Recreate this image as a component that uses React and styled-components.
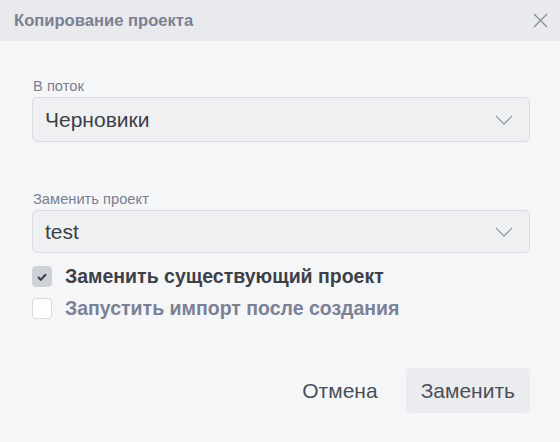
import React from 'react'
import styled, { createGlobalStyle } from 'styled-components';

const GlobalStyle = createGlobalStyle`
    html, body {
        margin: 0;
        padding: 0;
        background: #f5f6f8;
        font-family: "Liberation Sans", Arial, sans-serif;
    }
`;
const Dialog = styled.div`
    width: 560px;
    height: 442px;
    background: #f5f6f8;
    display: flex;
    flex-direction: column;
`;
const Header = styled.div`
    height: 41px;
    flex-shrink: 0;
    background: #e9eaee;
    display: flex;
    align-items: center;
    justify-content: space-between;
    padding: 0 12px 0 14px;
    box-sizing: border-box;
`;
const Title = styled.div`
    font-weight: bold;
    font-size: 16.6px;
    color: #7b8093;
    margin-top: 1px;
`;
const CloseButton = styled.button`
    border: none;
    background: none;
    padding: 0;
    width: 15px;
    height: 15px;
    display: flex;
    cursor: pointer;
`;
const Body = styled.div`
    display: flex;
    flex-direction: column;
    padding: 37px 30px 0 32px;
`;
const Field = styled.div`
    display: flex;
    flex-direction: column;
    margin-bottom: ${props => props.gap || 0}px;
`;
const Label = styled.div`
    font-size: 14.7px;
    line-height: 17px;
    color: #7b8090;
    margin-bottom: 2px;
    padding-left: 1px;
`;
const Select = styled.div`
    height: ${props => props.h || 45}px;
    box-sizing: border-box;
    border: 1px solid #dadbe0;
    border-radius: 5px;
    background: #eff0f2;
    display: flex;
    align-items: center;
    justify-content: space-between;
    padding: 0 16px 0 12px;
    font-size: 21px;
    color: #3c3f46;
`;
const CheckRow = styled.label`
    display: flex;
    align-items: center;
    gap: 13px;
    height: 21px;
    margin-top: ${props => props.top || 0}px;
    font-size: 19.5px;
    font-weight: bold;
    color: ${props => props.muted ? '#7c8194' : '#3d4047'};
`;
const Box = styled.span`
    width: 20px;
    height: 21px;
    box-sizing: border-box;
    border-radius: 4px;
    display: flex;
    align-items: center;
    justify-content: center;
    background: ${props => props.checked ? '#cfd1d8' : '#ffffff'};
    border: 1px solid ${props => props.checked ? '#cfd1d8' : '#d8dae0'};
`;
const Footer = styled.div`
    display: flex;
    justify-content: flex-end;
    align-items: center;
    gap: 13px;
    padding: 0 30px 29px 0;
    margin-top: auto;
`;
const Button = styled.button`
    height: 45px;
    border: none;
    border-radius: 4px;
    font-family: inherit;
    font-size: 21px;
    color: #4a4e57;
    padding: 0 15px;
    background: ${props => props.primary ? '#ebecef' : 'transparent'};
    cursor: pointer;
`;

const Chevron = () => (
    <svg width="18" height="10" viewBox="0 0 18 10" fill="none">
        <path d="M1 1l8 8 8-8" stroke="#9a9eab" strokeWidth="1.3" />
    </svg>
);

const App = () => {
    return (
        <Dialog>
            <GlobalStyle />
            <Header>
                <Title>Копирование проекта</Title>
                <CloseButton>
                    <svg width="15" height="15" viewBox="0 0 15 15">
                        <path d="M1 1l13 13M14 1L1 14" stroke="#8a8e9c" strokeWidth="1.4" />
                    </svg>
                </CloseButton>
            </Header>
            <Body>
                <Field gap={49}>
                    <Label>В поток</Label>
                    <Select>Черновики<Chevron /></Select>
                </Field>
                <Field>
                    <Label>Заменить проект</Label>
                    <Select h={43}>test<Chevron /></Select>
                </Field>
                <CheckRow top={13}>
                    <Box checked>
                        <svg width="10" height="8" viewBox="0 0 10 8">
                            <path d="M1 4l2.8 2.8L9 1.2" stroke="#3d4047" strokeWidth="2" fill="none" />
                        </svg>
                    </Box>
                    Заменить существующий проект
                </CheckRow>
                <CheckRow top={11} muted>
                    <Box />
                    Запустить импорт после создания
                </CheckRow>
            </Body>
            <Footer>
                <Button>Отмена</Button>
                <Button primary>Заменить</Button>
            </Footer>
        </Dialog>
    )
}
export default App;
